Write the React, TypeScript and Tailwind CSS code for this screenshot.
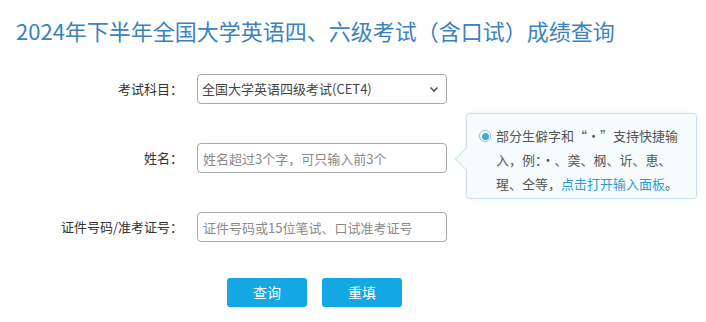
import React from "react";

const font = { fontFamily: '"Noto Sans CJK SC", "Noto Sans", "Liberation Sans", sans-serif' };

export default function App() {
  return (
    <div className="w-[706px] h-[322px] bg-white overflow-hidden px-4 pt-[14px]" style={font}>
      <h1 className="text-[22px] leading-[33px] text-[#3b82c0] font-normal">
        2024年下半年全国大学英语四、六级考试（含口试）成绩查询
      </h1>
      <div className="mt-[27px] flex flex-col gap-[39px]">
        <div className="flex items-center h-[30px]">
          <label className="w-[167px] text-right text-[13px] text-[#333]">考试科目：</label>
          <div className="relative ml-[14px] w-[250px] h-[30px]">
            <select
              className="appearance-none w-full h-full border border-[#a9a9a9] rounded-[4px] pl-[4px] text-[13px] text-[#444] bg-white outline-none"
              style={font}
              defaultValue="cet4"
            >
              <option value="cet4">全国大学英语四级考试(CET4)</option>
            </select>
            <svg className="absolute right-[8px] top-[12px] pointer-events-none" width="10" height="7" viewBox="0 0 10 7">
              <path d="M1.5 1.5 L5 5 L8.5 1.5" fill="none" stroke="#555" strokeWidth="1.6" />
            </svg>
          </div>
        </div>
        <div className="flex items-center h-[30px]">
          <label className="w-[167px] text-right text-[13px] text-[#333]">姓名：</label>
          <div className="relative ml-[14px] w-[250px] h-[30px]">
            <input
              className="w-full h-full border border-[#a9a9a9] rounded-[4px] pl-[5px] text-[13px] text-[#333] placeholder:text-[#8a8a8a] outline-none"
              style={font}
              placeholder="姓名超过3个字，可只输入前3个"
            />
            <div className="absolute left-[269px] top-[-30px] w-[231px] h-[86px] bg-[#f6fbfe] border border-[#cfe2ec] rounded-[4px] pl-[12px] pr-[6px] pt-[10px] text-[13px] leading-[24px] text-[#555] shadow-[0_0_3px_rgba(150,190,210,0.25)]">
              <div className="absolute left-[-9px] top-[37px] w-[16px] h-[16px] bg-[#f6fbfe] border-l border-b border-[#cfe2ec] rotate-45"></div>
              <div className="relative flex">
                <span className="mt-[6px] mr-[5px] w-[12px] h-[12px] shrink-0 rounded-full border border-[#8cc3e3] bg-white flex items-center justify-center">
                  <span className="w-[7px] h-[7px] rounded-full bg-[#4ba3d6]"></span>
                </span>
                <div className="whitespace-nowrap">
                  <div>部分生僻字和“·”支持快捷输</div>
                  <div>入，例：·、䶮、㭎、䜣、恵、</div>
                  <div>
                    瑆、仝等，<span className="text-[#2e9bd6] cursor-pointer">点击打开输入面板</span>。
                  </div>
                </div>
              </div>
            </div>
          </div>
        </div>
        <div className="flex items-center h-[30px]">
          <label className="w-[167px] text-right text-[13px] text-[#333]">证件号码/准考证号：</label>
          <div className="ml-[14px] w-[250px] h-[30px]">
            <input
              className="w-full h-full border border-[#a9a9a9] rounded-[4px] pl-[5px] text-[13px] text-[#333] placeholder:text-[#8a8a8a] outline-none"
              style={font}
              placeholder="证件号码或15位笔试、口试准考证号"
            />
          </div>
        </div>
      </div>
      <div className="mt-[36px] ml-[211px] flex gap-[15px]">
        <button className="w-[80px] h-[29px] rounded-[3px] bg-[#13a7e4] text-white text-[14px]" style={font}>
          查询
        </button>
        <button className="w-[80px] h-[29px] rounded-[3px] bg-[#13a7e4] text-white text-[14px]" style={font}>
          重填
        </button>
      </div>
    </div>
  );
}
